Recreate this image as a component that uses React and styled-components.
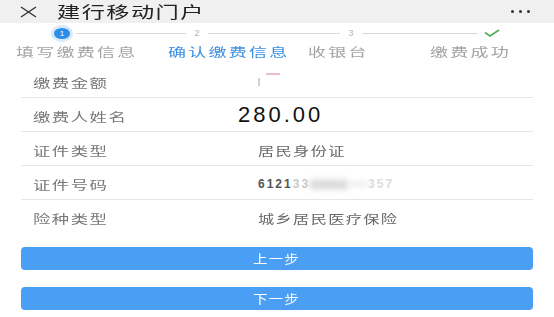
import React from 'react'
import styled, { createGlobalStyle } from 'styled-components'

const GlobalStyle = createGlobalStyle`
html, body {
margin: 0;
padding: 0;
background: #fff;
font-family: "Noto Sans CJK SC", "Noto Sans", sans-serif;
}`

const Page = styled.div`
width: 554px;
height: 317px;
overflow: hidden;
background: #fff;`

// the screenshot is stretched sideways, so text is widened with scaleX
const Wide = styled.span`
display: inline-block;
white-space: nowrap;
transform: scaleX(${p => p.sx || 1.45});
transform-origin: ${p => (p.center ? 'center' : 'left')} center;
letter-spacing: ${p => p.ls || 1}px;`

const Header = styled.div`
height: 23px;
background: #f0f0f0;
display: flex;
align-items: center;
padding: 0 24px 0 20px;`

const Title = styled.div`
margin-left: 20px;
font-size: 16px;
line-height: 21px;
color: #222;`

const Dots = styled.div`
margin-left: auto;
display: flex;
gap: 5px;
span {
    width: 3px;
    height: 3px;
    border-radius: 50%;
    background: #333;
}`

const StepBar = styled.div`
height: 20px;
display: flex;
align-items: center;
padding-left: 54px;`

const Circle = styled.div`
width: 16px;
height: 11px;
border-radius: 50%;
background: #2a8de8;
box-shadow: 0 0 0 3px #d7e9fb;
color: #fff;
font-family: "Liberation Sans", sans-serif;
font-size: 8px;
line-height: 11px;
text-align: center;`

const Line = styled.div`
width: ${p => p.w}px;
height: 1px;
margin: 0 6px;
background: #d9d9d9;`

const Num = styled.div`
width: 10px;
text-align: center;
font-family: "Liberation Sans", sans-serif;
font-size: 9px;
color: #b5b5b5;`

const StepLabels = styled.div`
display: grid;
grid-template-columns: 152px 140px 122px auto;
padding-left: 16px;
height: 16px;
align-items: center;`

const StepLabel = styled.div`
font-size: 12px;
color: ${p => (p.active ? '#3b8fe0' : '#a3a3a3')};`

const Rows = styled.div`
position: relative;
margin-top: 5px;`

const Row = styled.div`
margin: 0 21px;
padding: 3px 0 0 12px;
box-sizing: border-box;
display: flex;
align-items: center;
border-bottom: ${p => (p.last ? 'none' : '1px solid #e6e6e6')};
height: ${p => (p.last ? 33 : 34)}px;`

const Label = styled.div`
width: 225px;
font-size: 12px;
color: #777;`

const Value = styled.div`
font-size: 12px;
color: #666;
display: flex;
align-items: center;`

const Digits = styled.span`
font-family: "Liberation Sans", sans-serif;
font-weight: bold;
letter-spacing: 2px;
color: ${p => p.color || '#555'};`

const Smudge = styled.span`
display: inline-block;
width: ${p => p.w}px;
height: ${p => p.h}px;
background: ${p => p.bg};
filter: blur(${p => p.blur}px);
margin: 0 ${p => p.gap || 0}px ${p => p.up || 0}px;`

const Amount = styled.div`
position: absolute;
left: 238px;
top: 40px;
font-family: "Liberation Sans", sans-serif;
font-size: 22px;
line-height: 22px;
letter-spacing: 3px;
color: #111;`

const Buttons = styled.div`
display: flex;
flex-direction: column;
gap: 17px;
margin: 14px 21px 0;`

const Button = styled.button`
height: 23px;
border: none;
border-radius: 4px;
background: #4a9ff5;
color: #fff;
font-family: "Noto Sans CJK SC", sans-serif;
font-size: 12px;
padding: 0;`

const rows = [
    { label: '缴费金额', value: 'amount' },
    { label: '缴费人姓名', value: '' },
    { label: '证件类型', value: '居民身份证' },
    { label: '证件号码', value: 'id' },
    { label: '险种类型', value: '城乡居民医疗保险' },
]

const renderValue = (v) => {
    if (v === 'amount') {
        return (
            <>
                <Smudge w={2} h={8} bg="#d0d0d0" blur={0.5} />
                <Smudge w={14} h={2} bg="#f0bcc8" blur={0.6} gap={6} up={16} />
            </>
        )
    }
    if (v === 'id') {
        return (
            <>
                <Digits>6121</Digits>
                <Digits color="#c8c8c8">33</Digits>
                <Smudge w={38} h={9} bg="#d6d6d6" blur={3} />
                <Smudge w={20} h={6} bg="#f0f0f0" blur={2} />
                <Digits color="#dcdcdc">357</Digits>
            </>
        )
    }
    return v ? <Wide sx={1.35}>{v}</Wide> : null
}

const App = () => {
    return (
        <Page>
            <GlobalStyle />
            <Header>
                <svg width="17" height="12" viewBox="0 0 17 12">
                    <path d="M1 1 L16 11 M16 1 L1 11" stroke="#333" strokeWidth="1.4" fill="none" />
                </svg>
                <Title><Wide sx={1.45}>建行移动门户</Wide></Title>
                <Dots><span /><span /><span /></Dots>
            </Header>
            <StepBar>
                <Circle>1</Circle>
                <Line w={110} />
                <Num>2</Num>
                <Line w={132} />
                <Num>3</Num>
                <Line w={116} />
                <svg width="16" height="8" viewBox="0 0 16 8">
                    <path d="M1 3.5 L6 7 L15 1" stroke="#4fb04f" strokeWidth="1.6" fill="none" />
                </svg>
            </StepBar>
            <StepLabels>
                <StepLabel><Wide sx={1.5} ls={1.5}>填写缴费信息</Wide></StepLabel>
                <StepLabel active><Wide sx={1.5} ls={1.5}>确认缴费信息</Wide></StepLabel>
                <StepLabel><Wide sx={1.5} ls={1.5}>收银台</Wide></StepLabel>
                <StepLabel><Wide sx={1.5} ls={1.5}>缴费成功</Wide></StepLabel>
            </StepLabels>
            <Rows>
                {rows.map((r, i) => (
                    <Row key={r.label} last={i === rows.length - 1}>
                        <Label><Wide sx={1.45}>{r.label}</Wide></Label>
                        <Value>{renderValue(r.value)}</Value>
                    </Row>
                ))}
                <Amount>280.00</Amount>
            </Rows>
            <Buttons>
                <Button><Wide sx={1.2} center>上一步</Wide></Button>
                <Button><Wide sx={1.2} center>下一步</Wide></Button>
            </Buttons>
        </Page>
    )
}

export default App
